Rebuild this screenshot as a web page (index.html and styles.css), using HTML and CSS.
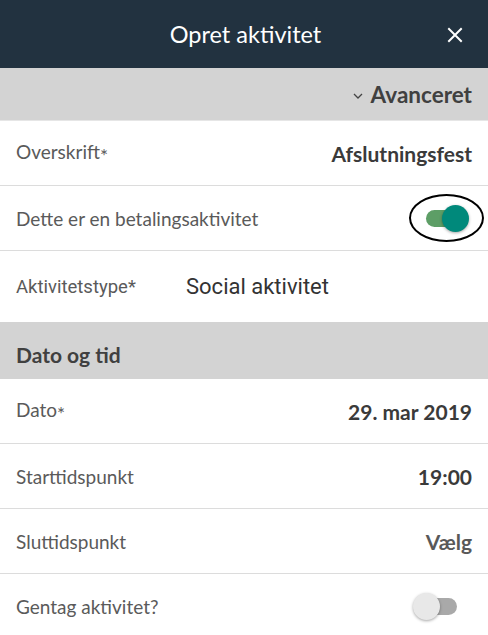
FILE: index.html
```html
<!DOCTYPE html>
<html lang="da">
<head>
<meta charset="utf-8">
<title>Opret aktivitet</title>
<link rel="stylesheet" href="styles.css">
</head>
<body>
<div class="screen">
  <header class="topbar">
    <h1 class="title">Opret aktivitet</h1>
    <span class="close">
      <svg width="16" height="16" viewBox="0 0 16 16"><path d="M2 2L14 14M14 2L2 14" stroke="#fff" stroke-width="2" stroke-linecap="square"/></svg>
    </span>
  </header>
  <div class="band band-right">
    <span class="chev"><svg width="10" height="6" viewBox="0 0 10 6"><path d="M1 1L5 5L9 1" fill="none" stroke="#444" stroke-width="1.3"/></svg></span>
    <span class="band-text">Avanceret</span>
  </div>
  <div class="row border">
    <span class="label">Overskrift<span class="star">*</span></span>
    <span class="value">Afslutningsfest</span>
  </div>
  <div class="row border">
    <span class="label">Dette er en betalingsaktivitet</span>
    <span class="toggle-wrap">
      <span class="ring"></span>
      <span class="toggle on"><span class="track"></span><span class="knob"></span></span>
    </span>
  </div>
  <div class="row tall">
    <span class="label roboto">Aktivitetstype*</span>
    <span class="select">Social aktivitet</span>
  </div>
  <div class="band band-section">
    <span class="band-text">Dato og tid</span>
  </div>
  <div class="row border">
    <span class="label">Dato<span class="star">*</span></span>
    <span class="value">29. mar 2019</span>
  </div>
  <div class="row border">
    <span class="label">Starttidspunkt</span>
    <span class="value">19:00</span>
  </div>
  <div class="row border">
    <span class="label">Sluttidspunkt</span>
    <span class="value light">Vælg</span>
  </div>
  <div class="row">
    <span class="label">Gentag aktivitet?</span>
    <span class="toggle off"><span class="track"></span><span class="knob"></span></span>
  </div>
</div>
</body>
</html>
```
FILE: styles.css
```css
* { box-sizing: border-box; }
html, body { margin: 0; padding: 0; background: #fff; }
body { font-family: Lato, "Open Sans", sans-serif; color: #555; }
.screen { width: 488px; height: 635px; overflow: hidden; }

.topbar {
  height: 68px;
  background: #223240;
  display: flex;
  align-items: center;
  justify-content: center;
  position: relative;
}
.title {
  margin: 0;
  font-weight: 400;
  font-size: 23.5px;
  color: #fff;
  padding-left: 3px;
}
.close {
  position: absolute;
  right: 25px;
  top: 27px;
  width: 16px;
  height: 16px;
  display: flex;
}

.band {
  background: #d3d3d3;
  display: flex;
  align-items: center;
  padding: 0 16px;
  height: 57px;
}
.band-section { padding-top: 8px; }
.band-right {
  justify-content: flex-end;
  height: 53px;
  border-bottom: 1px solid #e6e6e6;
  gap: 8px;
}
.band-text {
  font-weight: 700;
  font-size: 21px;
  color: #404040;
}
.band-right .band-text { font-size: 22.5px; }
.chev { display: flex; margin-top: 3px; }

.row {
  height: 65px;
  display: flex;
  align-items: center;
  justify-content: space-between;
  padding: 0 16px;
}
.row.border { border-bottom: 1px solid #dcdcdc; }
.row.tall { height: 71px; justify-content: flex-start; }
.label { font-size: 19px; color: #5a5a5a; }
.star { font-size: 19px; vertical-align: -4px; }
.label.roboto { font-family: Roboto, sans-serif; font-size: 18.5px; width: 170px; }
.select { font-family: Roboto, sans-serif; font-size: 22px; color: #333; }
.value { font-weight: 700; font-size: 21px; color: #3a3a3a; }
.value.light { color: #595959; }

.toggle-wrap {
  position: relative;
  width: 75px;
  height: 48px;
  display: flex;
  align-items: center;
  justify-content: center;
  margin-right: -12px;
}
.ring {
  position: absolute;
  inset: 0;
  border: 2.5px solid #000;
  border-radius: 50%;
}
.toggle {
  position: relative;
  width: 43px;
  height: 27px;
  display: block;
  margin-left: 1px;
}
.track {
  position: absolute;
  left: 0;
  top: 5px;
  width: 36px;
  height: 17px;
  border-radius: 9px;
}
.knob {
  position: absolute;
  top: 0;
  width: 27px;
  height: 27px;
  border-radius: 50%;
  box-shadow: 0 1px 3px rgba(0,0,0,0.35);
}
.toggle.on .track { background: #5d9e66; left: 0; }
.toggle.on .knob { background: #00897b; left: 16px; }
.toggle.off { width: 44px; margin-right: 15px; }
.toggle.off .track { background: #a9a9a9; left: 12px; width: 32px; }
.toggle.off .knob { background: #e8e8e8; left: 0; }
```
